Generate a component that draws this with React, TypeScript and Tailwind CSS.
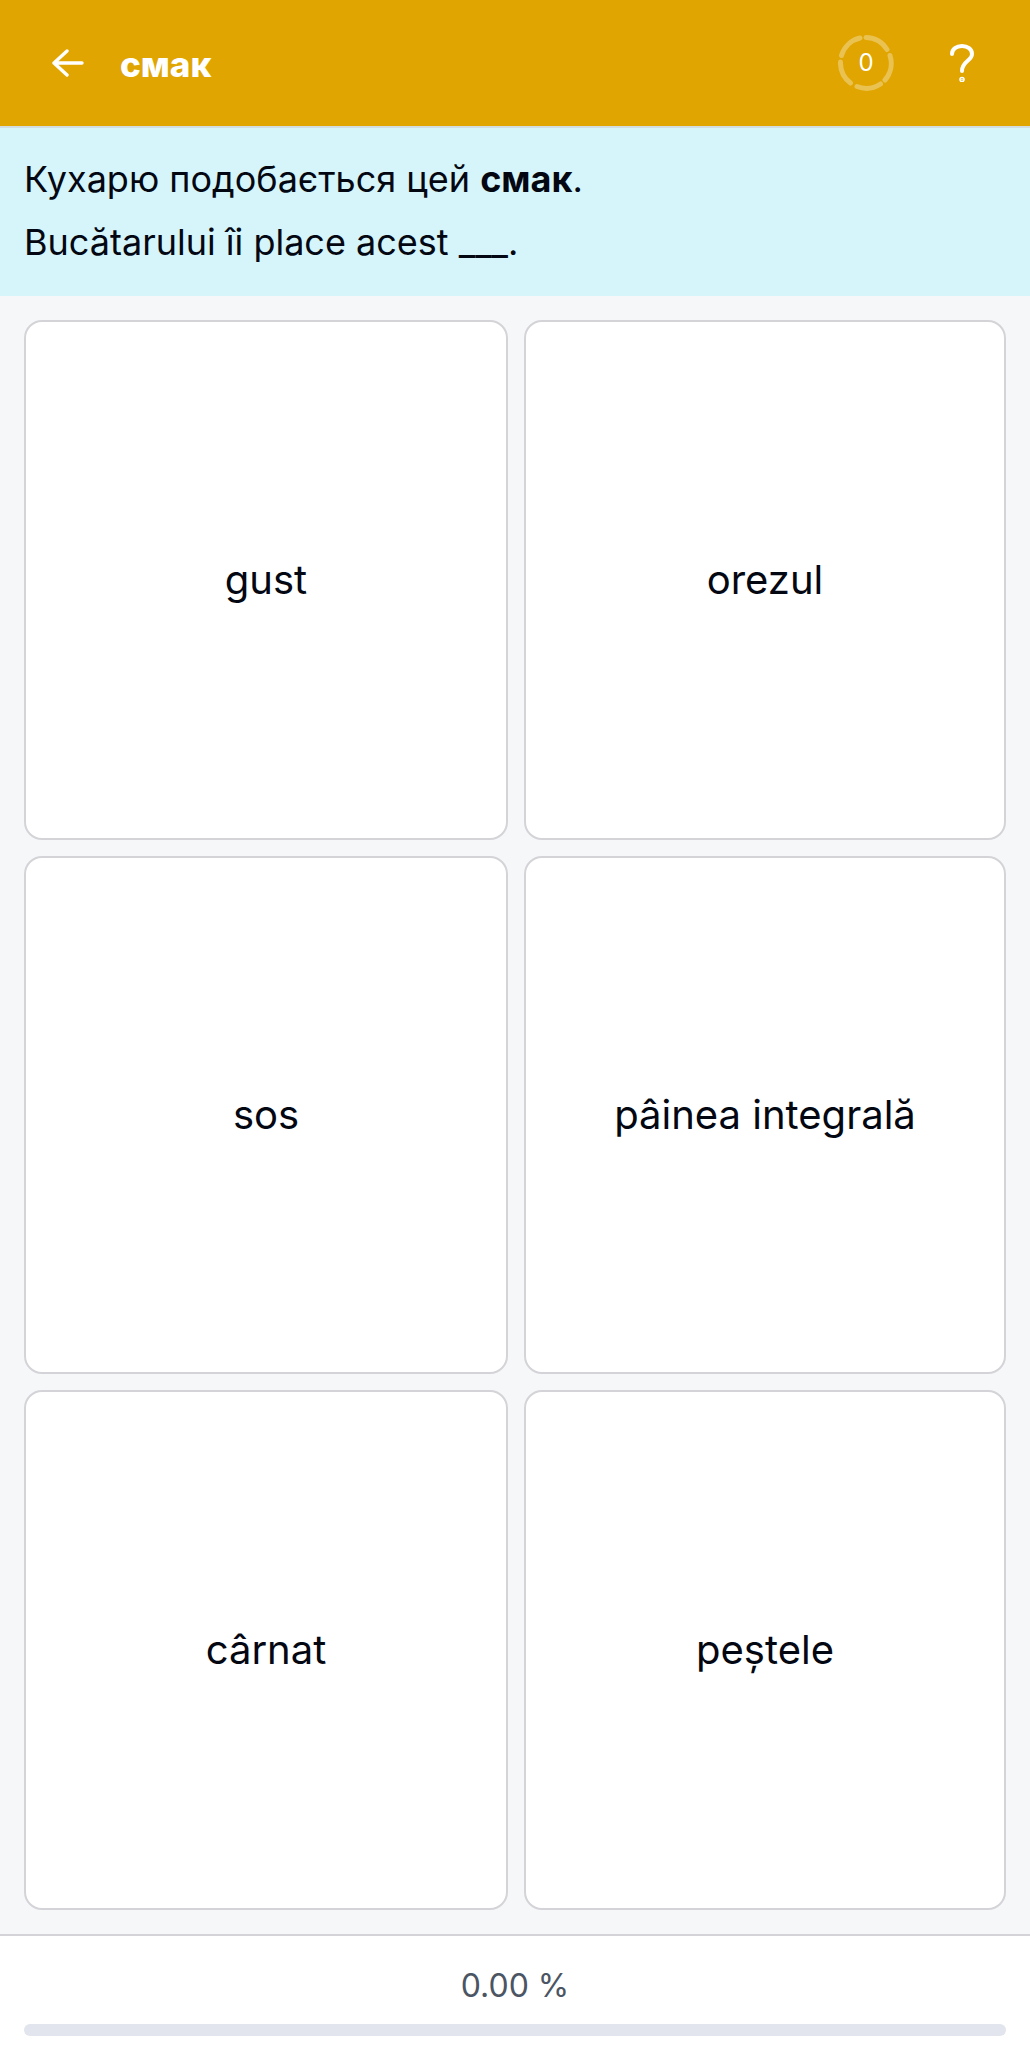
const cards = ["gust", "orezul", "sos", "pâinea integrală", "cârnat", "peștele"];

export default function App() {
  return (
    <div className="flex h-[2060px] w-full flex-col bg-[#f6f7f9] font-['Inter','Noto_Sans',sans-serif] text-[#030712]">
      <header className="flex h-[128px] shrink-0 items-center border-b-2 border-[#d1dde0] bg-[#e0a500] pl-[52px] pr-[56px] text-white">
        <svg className="h-[28px] w-[32px]" viewBox="0 0 32 28" fill="none" stroke="white" strokeWidth="3.4" strokeLinecap="round" strokeLinejoin="round">
          <path d="M2 14H30M15 2 2 14 15 26" />
        </svg>
        <h1 className="ml-[36px] mt-[2px] text-[35px] font-extrabold leading-none">смак</h1>
        <div className="ml-auto flex items-center gap-[56px]">
          <div className="relative flex h-[56px] w-[56px] items-center justify-center">
            <svg className="absolute inset-0" viewBox="0 0 56 56" fill="none" stroke="white" strokeOpacity="0.32" strokeWidth="5" strokeLinecap="round">
              <path d="M28 2.500A25.500 25.500 0 0 1 49 14.500" />
              <path d="M52 20.500A25.500 25.500 0 0 1 47 45" />
              <path d="M42.500 49A25.500 25.500 0 0 1 19 51.500" />
              <path d="M12.500 48A25.500 25.500 0 0 1 2.500 27" />
              <path d="M3.500 20.500A25.500 25.500 0 0 1 22 3" />
            </svg>
            <span className="text-[24px] leading-none">0</span>
          </div>
          <svg className="h-[38px] w-[24px]" viewBox="0 0 24 38" fill="none" stroke="white" strokeWidth="4" strokeLinecap="round">
            <path d="M2 10C2 5 6.500 2 12 2C17.500 2 22 5 22 10C22 17 12 17 12 27" />
            <circle cx="12" cy="35.500" r="0.800" fill="white" />
          </svg>
        </div>
      </header>
      <section className="flex h-[168px] shrink-0 flex-col justify-center gap-[27px] bg-[#d5f5fb] px-[24px] pb-[4px] text-[36px] leading-[36px]">
        <p>Кухарю подобається цей <strong className="font-bold">смак</strong>.</p>
        <p>Bucătarului îi place acest ___.</p>
      </section>
      <main className="grid min-h-0 flex-1 grid-cols-[484px_482px] grid-rows-[520px_518px_520px] gap-[16px] px-[24px] py-[24px]">
        {cards.map((c) => (
          <button key={c} className="flex items-center justify-center rounded-[18px] border-2 border-[#d4d4d8] bg-white text-[40px]">
            {c}
          </button>
        ))}
      </main>
      <footer className="flex h-[126px] shrink-0 flex-col items-center border-t-2 border-[#d4d4d8] bg-white px-[24px]">
        <div className="mt-[32px] text-[32px] leading-[36px] text-[#4b5563]">0.00 %</div>
        <div className="mt-[20px] h-[12px] w-full rounded-[6px] bg-[#e2e5ed]" />
      </footer>
    </div>
  );
}
